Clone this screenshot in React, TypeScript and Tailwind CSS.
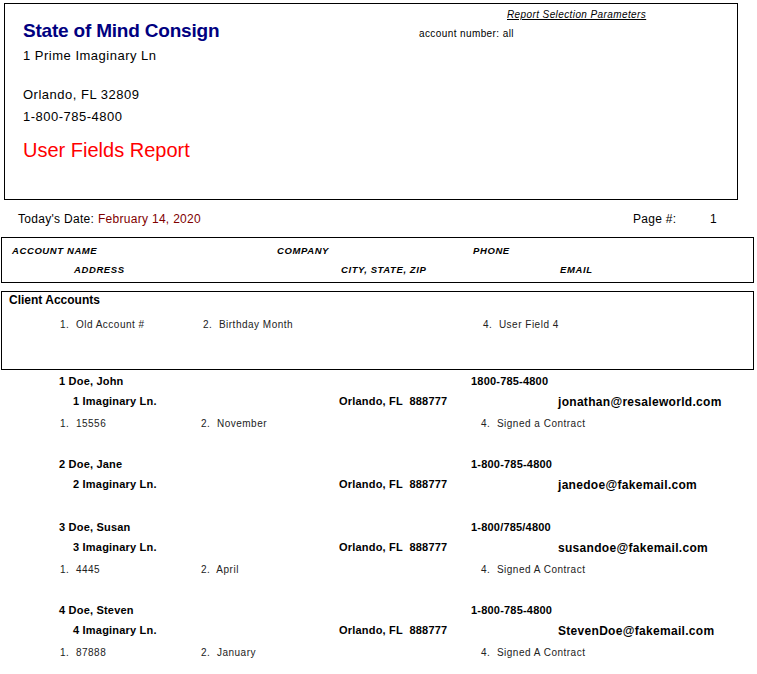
export default function App() {
  const records = [
    { n: "1 Doe, John", phone: "1800-785-4800", addr: "1 Imaginary Ln.", email: "jonathan@resaleworld.com", f: ["15556", "November", "Signed a Contract"] },
    { n: "2 Doe, Jane", phone: "1-800-785-4800", addr: "2 Imaginary Ln.", email: "janedoe@fakemail.com", f: null },
    { n: "3 Doe, Susan", phone: "1-800/785/4800", addr: "3 Imaginary Ln.", email: "susandoe@fakemail.com", f: ["4445", "April", "Signed A Contract"] },
    { n: "4 Doe, Steven", phone: "1-800-785-4800", addr: "4 Imaginary Ln.", email: "StevenDoe@fakemail.com", f: ["87888", "January", "Signed A Contract"] },
  ]
  return (
    <div className="w-[757px] h-[674px] overflow-hidden bg-white text-black font-[Liberation_Sans,sans-serif]">
      <div className="pt-[3px] pl-[4px]">
        <div className="w-[734px] h-[197px] border border-black flex">
          <div className="w-[395px] pl-[18px] pt-[16px]">
            <div className="text-[19px] font-bold text-[#000080] leading-[22px] tracking-[-0.2px]">State of Mind Consign</div>
            <div className="text-[13px] leading-[16px] mt-[6px] tracking-[0.5px]">1 Prime Imaginary Ln</div>
            <div className="text-[13px] leading-[16px] mt-[23px] tracking-[0.5px]">Orlando, FL 32809</div>
            <div className="text-[13px] leading-[16px] mt-[6px] tracking-[0.5px]">1-800-785-4800</div>
            <div className="text-[20px] text-[#ff0000] leading-[24px] mt-[13px]">User Fields Report</div>
          </div>
          <div className="flex-1 pt-[5px]">
            <div className="pl-[107px] text-[10px] italic underline leading-[12px] tracking-[0.4px]">Report Selection Parameters</div>
            <div className="pl-[19px] text-[10px] leading-[12px] mt-[7px] tracking-[0.4px]">account number: all</div>
          </div>
        </div>
      </div>
      <div className="flex h-[37px] items-center text-[12px] tracking-[0.3px]">
        <div className="w-[633px] pl-[18px]">Today's Date: <span className="text-[#800000]">February 14, 2020</span></div>
        <div className="w-[77px]">Page #:</div>
        <div>1</div>
      </div>
      <div className="ml-[1px] w-[753px] h-[46px] border border-black text-[9.5px] font-bold italic tracking-[0.6px] leading-[12px]">
        <div className="flex mt-[7px]">
          <div className="w-[275px] pl-[10px]">ACCOUNT NAME</div>
          <div className="w-[196px]">COMPANY</div>
          <div>PHONE</div>
        </div>
        <div className="flex mt-[7px]">
          <div className="w-[339px] pl-[72px]">ADDRESS</div>
          <div className="w-[219px]">CITY, STATE, ZIP</div>
          <div>EMAIL</div>
        </div>
      </div>
      <div className="ml-[1px] mt-[8px] w-[753px] h-[79px] border border-black">
        <div className="pl-[7px] pt-[1px] text-[12px] font-bold leading-[15px]">Client Accounts</div>
        <div className="flex mt-[11px] text-[10px] leading-[12px] tracking-[0.5px] text-[#222]">
          <div className="w-[201px] pl-[58px]">1.&nbsp; Old Account #</div>
          <div className="w-[280px]">2.&nbsp; Birthday Month</div>
          <div>4.&nbsp; User Field 4</div>
        </div>
      </div>
      <div className="pt-[1px]">
        {records.map((r, i) => (
          <div key={i} className={r.f ? "h-[83px]" : "h-[63px]"}>
            <div className="flex text-[11px] font-bold leading-[14px] h-[20px] items-center tracking-[0.2px]">
              <div className="w-[471px] pl-[59px]">{r.n}</div>
              <div>{r.phone}</div>
            </div>
            <div className="flex text-[11px] font-bold leading-[14px] h-[20px] items-center tracking-[0.2px]">
              <div className="w-[339px] pl-[73px]">{r.addr}</div>
              <div className="w-[219px]">Orlando, FL&nbsp; 888777</div>
              <div className="text-[12px] tracking-[0.3px] pt-[2px]">{r.email}</div>
            </div>
            {r.f && (
              <div className="flex mt-[7px] text-[10px] leading-[12px] tracking-[0.5px] text-[#222]">
                <div className="w-[201px] pl-[60px]">1.&nbsp; {r.f[0]}</div>
                <div className="w-[280px]">2.&nbsp; {r.f[1]}</div>
                <div>4.&nbsp; {r.f[2]}</div>
              </div>
            )}
          </div>
        ))}
      </div>
    </div>
  )
}
